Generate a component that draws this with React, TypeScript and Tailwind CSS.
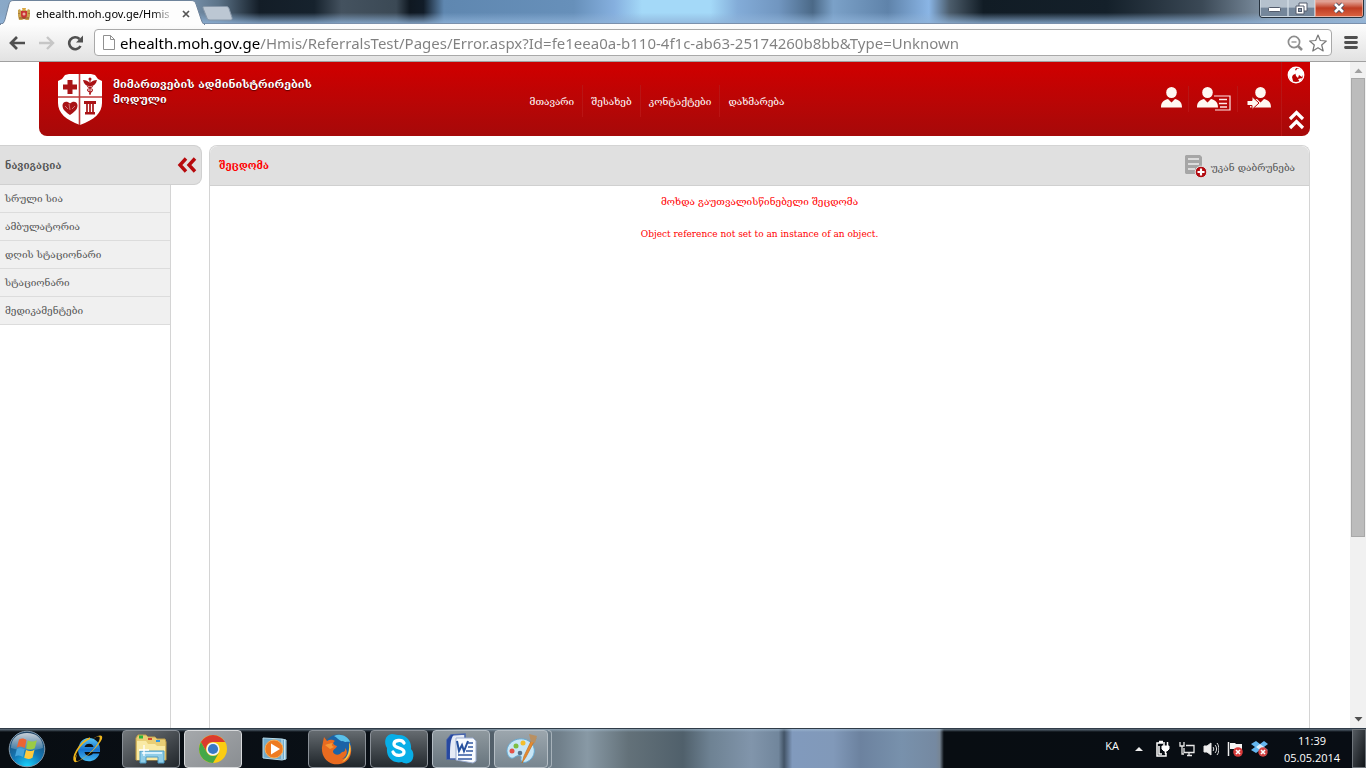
import React from "react";

const navItems = ["სრული სია", "ამბულატორია", "დღის სტაციონარი", "სტაციონარი", "მედიკამენტები"];
const menuItems = ["მთავარი", "შესახებ", "კონტაქტები", "დახმარება"];

function Emblem() {
  return (
    <svg width="14" height="14" viewBox="0 0 14 14" aria-hidden="true">
      <path d="M1 3l2-1 1 2 1-1 4 0 1 1 1-2 2 1v6l-1 4H9l-2-1-2 1H2L1 9z" fill="#c9a24c" />
      <path d="M4 4h6v4c0 2-1.500 3.500-3 4-1.500-.5-3-2-3-4z" fill="#c93434" />
      <path d="M5 1h4L8.500 3h-3z" fill="#d9a640" />
      <circle cx="7" cy="7" r="1.500" fill="#e9b0a0" />
      <path d="M2 6v1M12 6v1M2 11h10" stroke="#8b5528" />
    </svg>
  );
}

function TitleBar() {
  return (
    <header className="flex h-6 items-start justify-between border-b border-[#7a90ac] bg-[linear-gradient(to_bottom,transparent_55%,#8fb3d9cc_100%),linear-gradient(to_right,#8aa9c8_0%,#7690aa_14%,#5c7388_16%,#131d27_19%,#16222d_23%,#44525f_25%,#3b4955_29%,#0f1821_30%,#111c28_31%,#5f87b0_32.500%,#6790ba_42%,#86b0df_45%,#a4d9f8_47%,#a4d9f8_52%,#83acd8_54%,#7196c0_57%,#4b6987_59.500%,#7ba1c8_61%,#5f83aa_65%,#8ab5e5_68%,#4c5d6c_69.500%,#35434f_70.500%,#111c25_72%,#14202a_81%,#2a3743_85%,#3b4956_88%,#8496a8_93%,#a0b6cc_100%)]">
      <div className="flex h-6 items-start">
        <div className="relative h-6 w-[205px]">
          <svg className="absolute inset-0" width="205" height="25" viewBox="0 0 205 25" aria-hidden="true">
            <path d="M0 24.500c3 0 4-2 5-5L9 4c1-3 2-3.500 5-3.500h177c3 0 4 1 5 3.500l5 15c1 3 2 5.500 4 5.500z" fill="#fdfdfd" stroke="#6f849c" />
            <path d="M1 25h203" stroke="#fdfdfd" strokeWidth="2" />
          </svg>
          <div className="relative flex h-6 items-center gap-1 pt-1 pl-[17px]">
            <Emblem />
            <span className="ml-px w-[138px] whitespace-nowrap text-[11px] leading-4 text-black [mask-image:linear-gradient(to_right,black_85%,transparent)]">
              ehealth.moh.gov.ge/Hmis
            </span>
            <button aria-label="Close tab" className="ml-1 flex">
              <svg width="8" height="8" viewBox="0 0 8 8"><path d="M1 1l6 6M7 1L1 7" stroke="#555" strokeWidth="1.700" /></svg>
            </button>
          </div>
        </div>
        <button aria-label="New tab" className="-ml-1 pt-1.5">
          <svg width="32" height="15" viewBox="0 0 32 15">
            <path d="M4 .5h21c2 0 2.500.8 3 2l3 9c.5 1.500 0 2.500-1.500 2.500H9c-2 0-2.500-1-3-2L2 2C1.500 1 2.500.5 4 .5z" fill="#bcc7d3" stroke="#8797a9" />
          </svg>
        </button>
      </div>
      <div className="mr-0.5 flex h-[18px] shrink-0 overflow-hidden rounded-b border border-t-0 border-[#26323e] bg-[#26323e]">
        <button aria-label="Minimize" className="flex w-7 items-center justify-center border border-t-0 border-[#d2dce6]/70 bg-linear-to-b from-[#b5c1cd] from-45% to-[#74869a] to-50%">
          <svg width="13" height="6" viewBox="0 0 13 6" className="mt-1"><rect x=".5" y=".5" width="12" height="4" rx="1" fill="#fff" stroke="#535b6b" /></svg>
        </button>
        <button aria-label="Restore" className="flex w-[27px] items-center justify-center border border-t-0 border-[#d2dce6]/70 bg-linear-to-b from-[#b5c1cd] from-45% to-[#74869a] to-50%">
          <svg width="13" height="13" viewBox="0 0 13 13">
            <path d="M4 1h8v8H9v3H1V4h3z" fill="#fff" stroke="#535b6b" />
            <path d="M4 4h5v5" fill="none" stroke="#535b6b" />
            <rect x="3.500" y="6.500" width="3" height="3" fill="#8896a8" stroke="#535b6b" />
          </svg>
        </button>
        <button aria-label="Close" className="flex w-12 items-center justify-center border border-t-0 border-[#f0b8a8]/70 bg-linear-to-b from-[#e0a093] from-10% via-[#bf3c22] via-50% to-[#d9603f]">
          <svg width="14" height="12" viewBox="0 0 14 12">
            <path d="M3 2l8 8M11 2l-8 8" stroke="#4b4b5e" strokeWidth="4.500" />
            <path d="M3 2l8 8M11 2l-8 8" stroke="#fff" strokeWidth="2.600" />
          </svg>
        </button>
      </div>
    </header>
  );
}

function Toolbar() {
  return (
    <div className="flex h-[38px] items-center border-b border-[#a0a0a0] bg-linear-to-b from-[#fdfdfd] to-[#e2e2e2] pr-2 pl-2">
      <button aria-label="Back" className="flex w-[30px]">
        <svg width="18" height="16" viewBox="0 0 18 16"><path d="M17 8H4M9 2L3 8l6 6" fill="none" stroke="#4f4f4f" strokeWidth="2.700" /></svg>
      </button>
      <button aria-label="Forward" className="flex w-[29px]">
        <svg width="18" height="16" viewBox="0 0 18 16"><path d="M1 8h13M9 2l6 6-6 6" fill="none" stroke="#c6c6c6" strokeWidth="2.400" /></svg>
      </button>
      <button aria-label="Reload" className="flex w-[27px]">
        <svg width="17" height="16" viewBox="0 0 17 16">
          <path d="M13.500 11A6 6 0 1 1 12.500 4" fill="none" stroke="#505050" strokeWidth="2.600" />
          <path d="M16 .5v7H9z" fill="#505050" />
        </svg>
      </button>
      <div className="flex h-[27px] min-w-0 flex-1 items-center rounded-sm border border-[#a9a9a9] bg-white pr-1 pl-2">
        <svg width="12" height="15" viewBox="0 0 12 15" className="shrink-0" aria-hidden="true">
          <path d="M.5.500h7l4 4v10H.5zM7.500.500v4h4" fill="#fff" stroke="#909090" />
        </svg>
        <input
          aria-label="Address"
          className="ml-[5px] min-w-0 flex-1 bg-[linear-gradient(to_right,black_140px,#808080_140px)] bg-clip-text text-[15px] leading-6 text-transparent caret-black outline-none"
          defaultValue="ehealth.moh.gov.ge/Hmis/ReferralsTest/Pages/Error.aspx?Id=fe1eea0a-b110-4f1c-ab63-25174260b8bb&Type=Unknown"
        />
        <button aria-label="Zoom" className="flex">
          <svg width="16" height="16" viewBox="0 0 16 16" fill="none" stroke="#8d8d8d">
            <circle cx="7" cy="7" r="5.600" strokeWidth="1.700" /><path d="M4.500 7h5" strokeWidth="1.300" /><path d="M11 11l4 4" strokeWidth="2.500" />
          </svg>
        </button>
        <button aria-label="Bookmark" className="ml-1.5 flex">
          <svg width="18" height="18" viewBox="0 0 18 18"><path d="M9 1l2.300 5.500 6 .5-4.600 4 1.500 6L9 13.800 3.800 17l1.500-6L.7 7l6-.5z" fill="#fff" stroke="#777" strokeWidth="1.200" strokeLinejoin="round" /></svg>
        </button>
      </div>
      <button aria-label="Menu" className="ml-3 flex">
        <svg width="14" height="13" viewBox="0 0 14 13"><path d="M1.500 1.500h11M1.500 6.500h11M1.500 11.500h11" stroke="#505050" strokeWidth="2.800" strokeLinecap="round" /></svg>
      </button>
    </div>
  );
}

function Shield() {
  return (
    <svg width="46" height="53" viewBox="0 0 46 53" className="shrink-0" aria-hidden="true">
      <path d="M1 8l4-2 3-4 4-1h22l4 1 3 4 4 2v22c0 10-8 17-22 22C9 47 1 40 1 30z" fill="#fff" />
      <path d="M22.500 1v51M1 24h44" stroke="#c03a3a" strokeWidth="1.600" />
      <path d="M10.500 7h5v4.500h4.500v5h-4.500V21h-5v-4.500H6v-5h4.500z" fill="#a91316" />
      <path d="M26 7c3 0 5 1 7 3 2-2 4-3 7-3-1 4-3 6-6 6h-2C29 13 27 11 26 7z" fill="#a91316" />
      <path d="M33 6v16M30.500 13c0 2 5 2 5 4s-3 2-3 4M35.500 13c0 2-5 2-5 4s3 1 3 4" stroke="#a91316" fill="none" strokeWidth="1.100" />
      <circle cx="33" cy="6" r="1.500" fill="#a91316" />
      <path d="M13 42c-4-3-7.500-5-7.500-9.500 0-4 4.500-5 7.500-2 3-3 7.500-2 7.500 2C20.500 37 17 39 13 42z" fill="#a91316" />
      <path d="M8 33l3 3m1-5l1 6m5-4l-3 3" stroke="#dd9090" strokeWidth=".8" />
      <path d="M27 28h12v3H27zM28 39h10v2.500H28z" fill="#a91316" />
      <path d="M30 31v8M33 31v8M36 31v8" stroke="#a91316" strokeWidth="1.700" />
    </svg>
  );
}

function Person({ kind }: { kind: "user" | "card" | "login" }) {
  const x = kind === "login" ? 8 : 5;
  return (
    <svg width={kind === "user" ? 32 : 39} height="26" viewBox={kind === "user" ? "0 0 32 26" : "0 0 39 26"} aria-hidden="true">
      <g transform={`translate(${x} 0)`} fill="#fff8f2">
        <ellipse cx="10.500" cy="6.500" rx="5.300" ry="5.500" />
        <path d="M0 21.500c0-5 2-7 7-8.500l3.500 3.500L14 13c5 1.500 7 3.500 7 8.500z" />
      </g>
      {kind === "card" && (
        <g>
          <path d="M22 10h16v14H23" fill="none" stroke="#ffe8e8" strokeWidth="1.200" />
          <path d="M27 13.500h8M27 17.500h8M28 21h7" stroke="#ffe8e8" strokeWidth="1.400" />
        </g>
      )}
      {kind === "login" && (
        <path d="M5 14.500h5v-4l7 6.500-7 6.500v-4H5z" fill="#fff8f2" stroke="#b50505" strokeWidth="1" />
      )}
    </svg>
  );
}

function SiteHeader() {
  return (
    <div className="mr-10 ml-[39px] flex h-[74px] rounded-b-lg bg-linear-to-b from-[#cc0000] from-10% to-[#a60909] pl-[18px] text-white">
      <div className="flex flex-1 gap-2.5 pt-[11px]">
        <Shield />
        <h1 className="w-[250px] pt-1 text-[11px] leading-[15px] font-bold whitespace-nowrap [text-shadow:0_1px_1px_#5a0000]">
          მიმართვების ადმინისტრირების<br />მოდული
        </h1>
      </div>
      <nav className="flex h-full items-center pt-1 pr-[53px]">
        {menuItems.map((item, i) => (
          <a key={item} href="#" className={i ? "flex h-8 items-center border-l border-[#b91414] px-2 whitespace-nowrap" : "flex h-8 items-center px-2 whitespace-nowrap"}>
            {item}
          </a>
        ))}
      </nav>
      <div className="flex flex-1 justify-end">
        <div className="flex items-center">
          <button aria-label="User" className="flex border-r border-[#b81515]"><Person kind="user" /></button>
          <button aria-label="User card" className="flex border-r border-[#b81515] pr-1.5 pl-[3px]"><Person kind="card" /></button>
          <button aria-label="Sign in" className="flex pl-1"><Person kind="login" /></button>
        </div>
        <div className="flex w-[29px] flex-col items-center justify-between border-l border-[#b81515] pt-1 pb-1.5">
          <button aria-label="Language" className="flex">
            <svg width="18" height="18" viewBox="0 0 18 18">
              <circle cx="9" cy="9" r="7.700" fill="#bb0000" stroke="#fff" strokeWidth="1.400" />
              <path d="M2 6c1-3 4-4.500 7-4L8 4l2 1-2 3-2 1-1 2-3-2zM10 3c4-1 6 2 6.500 5l-1.500 3-3-2-1 3-2-2-1-4zM2 9l3 2 1 4c-2 0-4-2-4-6zM11 13l4-1-2 4z" fill="#fff" />
            </svg>
          </button>
          <button aria-label="Collapse header" className="flex">
            <svg width="17" height="20" viewBox="0 0 17 20"><path d="M2 9l6.500-6.500L15 9M2 18l6.500-6.500L15 18" fill="none" stroke="#fff" strokeWidth="3.200" /></svg>
          </button>
        </div>
      </div>
    </div>
  );
}

function Sidebar() {
  return (
    <aside className="flex w-[202px] shrink-0 flex-col">
      <div className="flex h-10 shrink-0 items-center justify-between rounded-r-lg border border-l-0 border-[#d0d0d0] bg-[#e0e0e0] pr-1 pl-[5px]">
        <h2 className="text-[10px] font-bold text-[#555]">ნავიგაცია</h2>
        <button aria-label="Collapse navigation" className="flex">
          <svg width="20" height="16" viewBox="0 0 20 16"><path d="M9 1.500L3 8l6 6.500M18 1.500L12 8l6 6.500" fill="none" stroke="#b70a0d" strokeWidth="3.400" /></svg>
        </button>
      </div>
      <nav className="w-[171px] flex-1 border-r border-[#d4d4d4]">
        {navItems.map((item) => (
          <a key={item} href="#" className="flex h-7 items-center border-b border-[#dcdcdc] bg-[#f0f0f0] pl-[5px] text-[#555]">
            {item}
          </a>
        ))}
      </nav>
    </aside>
  );
}

function ErrorPanel() {
  return (
    <main className="mr-10 ml-[7px] flex min-w-0 flex-1 flex-col rounded-t-lg border border-b-0 border-[#d4d4d4]">
      <div className="flex h-10 shrink-0 items-center justify-between rounded-t-lg border-b border-[#d0d0d0] bg-[#e0e0e0] pr-3.5 pl-[9px]">
        <h2 className="text-[10px] font-bold text-[#ff0000]">შეცდომა</h2>
        <a href="#" className="flex items-center gap-1 text-[#555]">
          <svg width="23" height="24" viewBox="0 0 23 24" aria-hidden="true">
            <path d="M2 1h14l2 2v15l-2 2H2l-1-1V2z" fill="#a6a6a6" />
            <path d="M4 5h11M4 10h11M4 15h7" stroke="#dcdcdc" strokeWidth="2" />
            <circle cx="17" cy="18" r="5.800" fill="#b20a10" stroke="#e0e0e0" />
            <path d="M17 14.500v7M13.500 18h7" stroke="#fff" strokeWidth="2.200" />
          </svg>
          <span className="pt-1">უკან დაბრუნება</span>
        </a>
      </div>
      <div className="flex flex-col items-center gap-4 pt-2 leading-4 text-[#ff0000]">
        <p>მოხდა გაუთვალისწინებელი შეცდომა</p>
        <p className="text-[9px]">Object reference not set to an instance of an object.</p>
      </div>
    </main>
  );
}

function Scrollbar() {
  return (
    <div className="flex w-4 shrink-0 flex-col items-center bg-[#f1f1f1]" aria-hidden="true">
      <svg width="15" height="16" viewBox="0 0 15 16"><path d="M3.500 11h8l-4-4.500z" fill="#a0a0a0" /></svg>
      <div className="flex w-full flex-1 flex-col">
        <div className="mx-px grow-[71] basis-0 border border-[#a8a8a8] bg-[#bcbcbc]" />
        <div className="grow-[27] basis-0" />
      </div>
      <svg width="15" height="17" viewBox="0 0 15 17"><path d="M3.500 6h8l-4 4.500z" fill="#505050" /></svg>
    </div>
  );
}

function StartOrb() {
  return (
    <svg width="38" height="38" viewBox="0 0 38 38">
      <defs>
        <radialGradient id="orb" cx=".5" cy="1" r=".95"><stop offset="0" stopColor="#18d6ff" /><stop offset=".45" stopColor="#1379b8" /><stop offset="1" stopColor="#204466" /></radialGradient>
        <linearGradient id="shine" x1="0" y1="0" x2="0" y2="1"><stop offset="0" stopColor="#fff" stopOpacity=".75" /><stop offset="1" stopColor="#fff" stopOpacity=".15" /></linearGradient>
      </defs>
      <circle cx="19" cy="19" r="17.800" fill="url(#orb)" stroke="#8298aa" strokeWidth="1" />
      <path d="M3 18C3 8 10 3 19 3s16 5 16 15c-9 3-23 3-32 0z" fill="url(#shine)" />
      <path d="M11 9.500c3-1.500 5-1 7.500.5l-1.700 8c-2.500-1.500-5-2-8-.5z" fill="#ed6433" />
      <path d="M19.800 10.500c3 1.500 6 1.500 9-.3l-2 8c-3 1.700-6 1.700-8.700.3z" fill="#9bcb45" />
      <path d="M8.800 19c3-1.500 5.500-1 8 .5L15 27c-2.500-1.500-5-2-8-.5z" fill="#46a5dc" />
      <path d="M18 20c3 1.500 6 1.500 8.500-.2l-2 8c-3 1.600-5.500 1.500-8.300 0z" fill="#ffca3d" />
    </svg>
  );
}

function ExplorerIcon() {
  return (
    <svg width="32" height="32" viewBox="0 0 32 32">
      <path d="M1 5l2-3h8l2 2h7l2 2h8l1 3v18H1z" fill="#e9ce75" stroke="#c2a04b" />
      <path d="M2 8h9l2 3h7l2 2h8v14H2z" fill="#f9eaa5" />
      <path d="M4 2.500h4v3H4z" fill="#29b43b" /><path d="M13 5h4v2h-4z" fill="#d6462d" /><path d="M21 7h4v2h-4z" fill="#3298df" />
      <path d="M5 18h24v12h-6v-6H11v6H5z" fill="#8fcde8" stroke="#4c9cc5" />
      <path d="M7 20h20" stroke="#d6f1fc" strokeWidth="2" /><path d="M9 12v11M4 17h10" stroke="#fff" strokeWidth="1.300" />
    </svg>
  );
}

function ChromeIcon() {
  return (
    <svg width="30" height="30" viewBox="0 0 30 30">
      <circle cx="15" cy="15" r="14" fill="#fbcc12" />
      <path d="M2.900 8A14 14 0 0 1 27.100 8H15a7 7 0 0 0-6.100 10.500z" fill="#db3b2d" />
      <path d="M2.900 8A14 14 0 0 0 15 29l6.100-10.500a7 7 0 0 1-12.200 0z" fill="#44a848" />
      <circle cx="15" cy="15" r="6.600" fill="#f3f5f5" /><circle cx="15" cy="15" r="5.100" fill="#3879c6" />
    </svg>
  );
}

function IeIcon() {
  return (
    <svg width="34" height="34" viewBox="0 0 34 34">
      <defs><linearGradient id="ie" x1="0" y1="0" x2="0" y2="1"><stop offset="0" stopColor="#5bc7f5" /><stop offset=".5" stopColor="#1672ce" /><stop offset="1" stopColor="#43b9f2" /></linearGradient></defs>
      <path d="M30 20H14.500c.5 4 6 5 8.500 1.500h6.500C26.500 30 17 31 12 27 5 21 8 7 18 6c8-.5 13 6 12 14zM14.500 15h9c-.5-4.500-8-4.500-9 0z" fill="url(#ie)" />
      <path d="M7 22C3 29 3 32 9 29 17 25 29 14 32 7c1.500-5-4-4-9 0 6-4 8-3 6 2C25 18 13 27 8 29c-3 1-2-3-1-7z" fill="#edb51d" />
      <path d="M5 29C2 26 8 12 20 6" fill="none" stroke="#edb51d" strokeWidth="1.800" />
    </svg>
  );
}

function MediaIcon() {
  return (
    <svg width="28" height="28" viewBox="0 0 28 28">
      <path d="M2 3l19 1 4 1v19l-4 1-19-2z" fill="#72abcb" stroke="#b6dbec" /><path d="M21 4v20M23.500 5v19" stroke="#cbe7f2" />
      <circle cx="13" cy="14" r="9" fill="#ee7b21" stroke="#f9af56" /><path d="M10 8.500l9 5.500-9 5.500z" fill="#fff" />
    </svg>
  );
}

function FirefoxIcon() {
  return (
    <svg width="32" height="32" viewBox="0 0 32 32">
      <circle cx="17" cy="15" r="13.500" fill="#1b63a7" />
      <path d="M13 3c6-3 14 0 16 6-3-1-4 1-7-1-3 1-5-3-9-5z" fill="#5ac0e9" />
      <path d="M3 4l3 4c3-2 6-1 8 0-3 2-2 4 2 5-1 3-4 3-4 6 2 4 7 3 9 0 4 0 3-3 3-4 4 4 1 9-3 11 7-1 9-9 7-17 5 10 1 20-9 22C8 33 0 25 1 14z" fill="#e96b20" />
      <path d="M28 9c4 9 0 17-7 20 6-5 8-12 7-20z" fill="#f9ce45" />
      <path d="M4 12c3-1 5-2 8-2-2 2-1 3 1 4l-4 2z" fill="#f89835" />
    </svg>
  );
}

function SkypeIcon() {
  return (
    <svg width="32" height="32" viewBox="0 0 32 32">
      <path d="M9 1c3 0 4 1 6 1 8-1 14 6 13 14 2 2 3 5 2 9-1 5-7 7-11 4C10 31 3 25 4 15 0 9 3 1 9 1z" fill="#08aee7" />
      <path d="M21 10c-2-4-10-3-10 1 0 5 10 3 10 8 0 4-9 5-11 0" fill="none" stroke="#fff" strokeWidth="3.300" strokeLinecap="round" />
    </svg>
  );
}

function WordIcon() {
  return (
    <svg width="32" height="32" viewBox="0 0 32 32">
      <path d="M2 7l4-5 14-1v23l-4 2H2z" fill="#e6ebf6" stroke="#4764ac" strokeWidth="1.500" />
      <path d="M2 7l4-5 3-.5C5 6 5 14 5 26H2z" fill="#2748a0" />
      <path d="M11 5h17l3 3v20l-3 2-17-3z" fill="#f8fbff" stroke="#9badd1" />
      <path d="M12 8l2 10 3-6 2 6 4-10" fill="none" stroke="#25509e" strokeWidth="2" />
      <path d="M23 10h5M23 14h5M21 18h7M13 22h14M13 26h14" stroke="#3258a1" strokeWidth="1.600" />
    </svg>
  );
}

function PaintIcon() {
  return (
    <svg width="32" height="32" viewBox="0 0 32 32">
      <path d="M2 19C1 10 12 3 22 7c9 4 9 14 4 19-6 6-11 3-10-1 1-3-3-3-6-1-4 3-7 0-8-5z" fill="#c8e6f6" stroke="#64a9d2" />
      <circle cx="7" cy="18" r="2.500" fill="#e45349" /><circle cx="11" cy="13" r="2.500" fill="#7dbe42" /><circle cx="18" cy="10" r="2.500" fill="#f4be2b" /><circle cx="15" cy="20" r="2.300" fill="#55738d" />
      <path d="M28 4l3 1-10 19-4 6 2-7z" fill="#e78a2d" stroke="#b86b20" strokeWidth=".6" />
      <path d="M24 1l8 2-2 7-4-1z" fill="#b99062" />
    </svg>
  );
}

function Tray() {
  return (
    <div className="flex h-full items-center text-white">
      <span className="mr-4 pb-1 font-['Open_Sans','Noto_Sans',sans-serif] text-[11px]">KA</span>
      <button aria-label="Show hidden icons" className="mr-3 flex"><svg width="8" height="5" viewBox="0 0 8 5"><path d="M0 5l4-4 4 4z" fill="#eee" /></svg></button>
      <div className="flex items-center gap-2">
        <svg width="16" height="18" viewBox="0 0 16 18" fill="none" stroke="#fff"><path d="M8 3H2v13h9v-3M4 1.500h4" strokeWidth="1.500" /><path d="M4 6v8h3" strokeWidth="1.500" /><path d="M7 6h7v3l-2 2H9L7 9z" fill="#fff" /><path d="M9 2v4M12.500 2v4M10.500 11v3" strokeWidth="1.500" /></svg>
        <svg width="16" height="16" viewBox="0 0 16 16" fill="none" stroke="#e8e8e8"><path d="M7 4.500h8v7H5V7M8 14.500h5M10 12v2" strokeWidth="1.300" /><path d="M1 1v4h4V1M3 5v8h2" strokeWidth="1.300" /></svg>
        <svg width="16" height="16" viewBox="0 0 16 16" fill="none" stroke="#e6e6e6"><path d="M1 5h3l4-3v12l-4-3H1z" fill="#eee" /><path d="M10 6c1 1 1 3 0 4M12 4c2 2 2 6 0 8M14 2c2.500 3 2.500 9 0 12" /></svg>
        <svg width="16" height="16" viewBox="0 0 16 16"><path d="M1.500 1v14" stroke="#eee" strokeWidth="1.500" /><path d="M3 2h5l1 1h6v6H8L7 8H3z" fill="#f5f5f5" /><circle cx="11" cy="11" r="4.800" fill="#d83b3b" /><path d="M9 9l4 4M13 9l-4 4" stroke="#fff" strokeWidth="1.600" /></svg>
        <svg width="17" height="16" viewBox="0 0 17 16"><path d="M5 0l4 3 4-3 4 3-4 3 4 3-4 3-4-3-4 3-5-3 4-3-4-3z" fill="#64b6ef" /><path d="M9 3l4 3-4 3-4-3z" fill="#d5effd" /><circle cx="12" cy="11" r="4.700" fill="#d14545" /><path d="M10 9l4 4M14 9l-4 4" stroke="#fff" strokeWidth="1.600" /></svg>
      </div>
      <time className="ml-4 flex w-[56px] flex-col text-center font-['Open_Sans','Noto_Sans',sans-serif] text-[11px] leading-[17px]">
        <span>11:39</span><span>05.05.2014</span>
      </time>
      <button aria-label="Show desktop" className="ml-3 h-full w-3.5 border border-[#6f757b] bg-linear-to-br from-[#555b61] to-[#111519]" />
    </div>
  );
}

function Taskbar() {
  const apps = [
    { name: "Explorer", icon: <ExplorerIcon />, style: "w-[58px] border-[#8a9097] bg-linear-to-br from-[#73787c] to-[#22272c]" },
    { name: "Chrome", icon: <ChromeIcon />, style: "w-[58px] border-[#d8dadc] bg-linear-to-br from-[#a5a8ab] to-[#8a8e92]" },
    { name: "Media Player", icon: <MediaIcon />, style: "w-[58px] border-transparent" },
    { name: "Firefox", icon: <FirefoxIcon />, style: "w-[58px] border-[#8a9097] bg-linear-to-b from-[#656b70] to-[#20262b]" },
    { name: "Skype", icon: <SkypeIcon />, style: "w-[58px] border-[#8a9097] bg-linear-to-b from-[#656b70] to-[#252b30]" },
    { name: "Word", icon: <WordIcon />, style: "w-[58px] border-[#b4bdc4] bg-linear-to-b from-[#8f999f] to-[#68757e]" },
    { name: "Paint", icon: <PaintIcon />, style: "w-[54px] border-[#b4bdc4] bg-linear-to-b from-[#9ca6ad] to-[#788690]" },
  ];
  return (
    <footer className="flex h-10 shrink-0 items-stretch justify-between border-t border-[#303c48] bg-[linear-gradient(to_bottom,#aec8dd88_0px,transparent_3px),linear-gradient(to_right,#080d12_0%,#0a1017_31%,#46515b_34%,#657682_39%,#71808b_41%,#8899a5_43%,#637179_46%,#50606b_50%,#6e8293_52%,#8195ab_55%,#71869c_57%,#435467_57.400%,#819abd_58%,#8199b9_61%,#6c829f_63%,#7891ac_66%,#7589a1_68.500%,#778594_68.800%,#080d12_69.100%,#080d14_100%)]">
      <div className="flex items-center gap-1 pl-2">
        <button aria-label="Start" className="flex"><StartOrb /></button>
        <button aria-label="Internet Explorer" className="flex w-[68px] justify-center pl-1.5"><IeIcon /></button>
        {apps.map((app) => (
          <button key={app.name} aria-label={app.name} className={`flex h-[38px] items-center justify-center rounded-sm border ${app.style}`}>
            {app.icon}
          </button>
        ))}
        <div className="-ml-1 h-[38px] w-1 rounded-r-sm border border-l-0 border-[#a7b2ba]" />
      </div>
      <Tray />
    </footer>
  );
}

export default function App() {
  return (
    <div className="flex h-screen flex-col overflow-hidden bg-white font-['Noto_Sans','Open_Sans',sans-serif]">
      <TitleBar />
      <Toolbar />
      <div className="flex min-h-0 flex-1 font-['DejaVu_Serif','Liberation_Serif',serif] text-[10px]">
        <div className="flex min-w-0 flex-1 flex-col">
          <SiteHeader />
          <div className="mt-[9px] flex min-h-0 flex-1">
            <Sidebar />
            <ErrorPanel />
          </div>
        </div>
        <Scrollbar />
      </div>
      <Taskbar />
    </div>
  );
}
